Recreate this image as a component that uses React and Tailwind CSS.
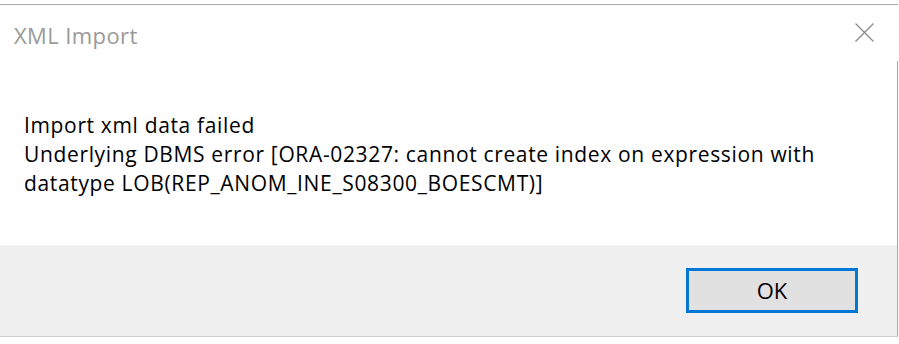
import React from 'react';

const CloseIcon = () => (
    <svg width="19" height="19" viewBox="0 0 19 19" className="block">
        <path d="M0.5 0.5 L18.5 18.5 M18.5 0.5 L0.5 18.5" stroke="#8a8a8a" strokeWidth="1.3" fill="none" />
    </svg>
);

const App = () => {
    return (
        <div className="w-[899px] h-[344px] bg-white pt-[4px]" style={{ fontFamily: '"Open Sans", "Noto Sans", sans-serif' }}>
            <div className="w-[898px] border-t border-[#a9a9a9] border-b border-b-[#cccccc] bg-white">
                {/* title bar */}
                <div className="h-[56px] flex items-start justify-between">
                    <span className="ml-[14px] mt-[16px] text-[22px] leading-[28px] tracking-[0.4px] text-[#9a9a9a]">XML Import</span>
                    <button className="mr-[24px] mt-[18px]">
                        <CloseIcon />
                    </button>
                </div>

                <div className="border-r border-[#a9a9a9]">
                    {/* message */}
                    <div className="h-[184px] pl-[24px] pt-[50px] text-[21px] leading-[29px] tracking-[0.65px] text-black">
                        <div>Import xml data failed</div>
                        <div>Underlying DBMS error [ORA-02327: cannot create index on expression with</div>
                        <div>datatype LOB(REP_ANOM_INE_S08300_BOESCMT)]</div>
                    </div>

                    {/* footer */}
                    <div className="h-[91px] bg-[#f0f0f0] flex items-center justify-end pr-[39px]">
                        <button className="w-[172px] h-[45px] border-[3px] border-[#0078d7] bg-[#e1e1e1] text-[22px] text-black flex items-center justify-center">
                            OK
                        </button>
                    </div>
                </div>
            </div>
        </div>
    );
};

export default App;
